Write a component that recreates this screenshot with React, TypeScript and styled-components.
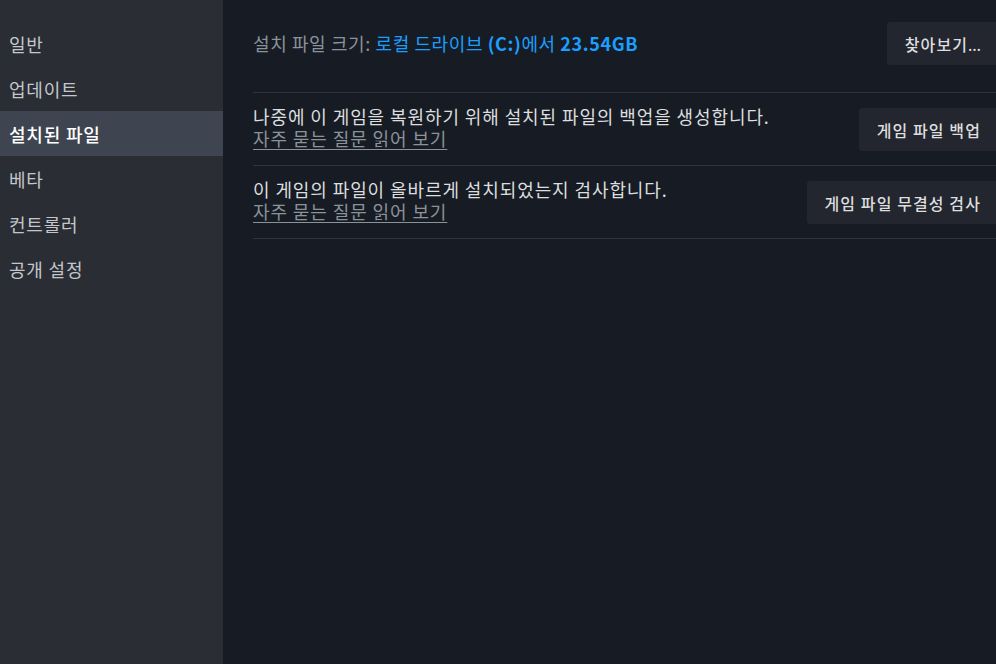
import React from 'react'
import styled, { createGlobalStyle } from 'styled-components'

const GlobalStyle = createGlobalStyle`
  html, body {
    margin: 0;
    padding: 0;
    background: #171c24;
  }
  body {
    font-family: "Noto Sans CJK KR", "Noto Sans", sans-serif;
  }
`

const Layout = styled.div`
  display: flex;
  width: 996px;
  height: 664px;
  overflow: hidden;
`

const Sidebar = styled.nav`
  width: 223px;
  flex-shrink: 0;
  background: #2a2d34;
  padding-top: 21px;
  display: flex;
  flex-direction: column;
`

const NavItem = styled.div<{ $active?: boolean }>`
  height: 45px;
  display: flex;
  align-items: center;
  padding-left: 9px;
  font-size: 18px;
  letter-spacing: 0.8px;
  color: ${(p) => (p.$active ? '#ffffff' : '#c3c6cb')};
  background: ${(p) => (p.$active ? '#3e4450' : 'transparent')};
  font-weight: ${(p) => (p.$active ? 500 : 400)};
`

const Main = styled.main`
  flex: 1;
  padding-left: 30px;
  display: flex;
  flex-direction: column;
`

const Row = styled.div<{ $first?: boolean }>`
  display: flex;
  align-items: center;
  justify-content: space-between;
  border-bottom: 1px solid #30353d;
  padding: ${(p) => (p.$first ? '22px 0 27px' : '12px 0 11px')};
`

const Info = styled.div`
  display: flex;
  flex-direction: column;
  padding-bottom: 5px;
`

const SizeText = styled.div`
  font-size: 18px;
  letter-spacing: 0.6px;
  color: #8b929a;
  margin-top: -2px;
`

const Blue = styled.span<{ $bold?: boolean }>`
  color: #1a9fff;
  font-weight: ${(p) => (p.$bold ? 700 : 400)};
`

const Description = styled.div`
  font-size: 18px;
  letter-spacing: 0.9px;
  color: #dcdedf;
  line-height: 22px;
`

const FaqLink = styled.a`
  font-size: 18px;
  letter-spacing: 0.9px;
  color: #8b929a;
  text-decoration: underline;
  text-underline-offset: 3px;
  line-height: 22px;
  cursor: pointer;
`

const ActionButton = styled.button`
  height: 43px;
  padding: 0 15px 0 18px;
  border: none;
  border-radius: 3px 0 0 3px;
  background: #23262e;
  color: #dcdedf;
  font-family: inherit;
  font-size: 16px;
  letter-spacing: 1.1px;
  font-weight: 500;
  cursor: pointer;
  white-space: nowrap;
`

const Ellipsis = styled.span`
  font-family: "Noto Sans", sans-serif;
  letter-spacing: 0;
`

const menu = ['일반', '업데이트', '설치된 파일', '베타', '컨트롤러', '공개 설정']

export default function App() {
  return (
    <>
      <GlobalStyle />
      <Layout>
        <Sidebar>
          {menu.map((m) => (
            <NavItem key={m} $active={m === '설치된 파일'}>
              {m}
            </NavItem>
          ))}
        </Sidebar>
        <Main>
          <Row $first>
            <SizeText>
              설치 파일 크기: <Blue>로컬 드라이브 </Blue>
              <Blue $bold>(C:)</Blue>
              <Blue>에서 </Blue>
              <Blue $bold>23.54GB</Blue>
            </SizeText>
            <ActionButton>
              찾아보기<Ellipsis>…</Ellipsis>
            </ActionButton>
          </Row>
          <Row>
            <Info>
              <Description>나중에 이 게임을 복원하기 위해 설치된 파일의 백업을 생성합니다.</Description>
              <FaqLink>자주 묻는 질문 읽어 보기</FaqLink>
            </Info>
            <ActionButton>게임 파일 백업</ActionButton>
          </Row>
          <Row>
            <Info>
              <Description>이 게임의 파일이 올바르게 설치되었는지 검사합니다.</Description>
              <FaqLink>자주 묻는 질문 읽어 보기</FaqLink>
            </Info>
            <ActionButton>게임 파일 무결성 검사</ActionButton>
          </Row>
        </Main>
      </Layout>
    </>
  )
}
